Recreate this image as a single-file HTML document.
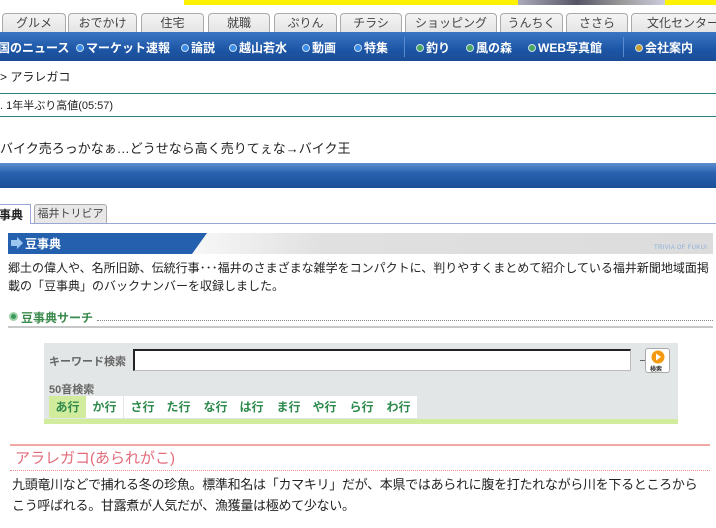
<!DOCTYPE html>
<html><head><meta charset="utf-8">
<style>
*{margin:0;padding:0;box-sizing:border-box}
body{width:716px;height:528px;overflow:hidden;background:#fff;font-family:"Liberation Sans","Noto Sans CJK JP",sans-serif;position:relative;color:#222}
.abs{position:absolute;white-space:nowrap}
.tab{position:absolute;top:13px;height:20px;background:linear-gradient(#f4f4f4,#e4e4e4);border:1px solid #aaa;border-bottom:none;border-radius:4px 4px 0 0;font-size:12px;color:#444;text-align:center;line-height:19px;white-space:nowrap;overflow:hidden}
.nav{position:absolute;top:32px;left:0;width:716px;height:29px;background:linear-gradient(#3a76c4,#1d56a6 60%,#1a4c95);color:#fff;font-size:12px;font-weight:bold}
.nav span{position:absolute;top:7px;white-space:nowrap}
.dot{display:inline-block;width:8px;height:8px;border-radius:50%;margin-right:2px;vertical-align:0px;border:1px solid #cde}
.sep{position:absolute;top:5px;width:1px;height:20px;background:#5a8ad0}
.g{position:absolute;top:396px;height:22px;width:37px;background:#fff;color:#2e8a4c;font-size:12px;font-weight:bold;text-align:center;line-height:22px}
</style></head><body>
<div class="abs" style="left:184px;top:0;width:532px;height:5px;background:#fff200"></div>
<div class="abs" style="left:518px;top:0;width:147px;height:5px;background:linear-gradient(90deg,#aab,#556 40%,#999 70%,#ccd)"></div>

<div class="tab" style="left:2px;width:64px">グルメ</div>
<div class="tab" style="left:68px;width:69px">おでかけ</div>
<div class="tab" style="left:141px;width:63px">住宅</div>
<div class="tab" style="left:208px;width:62px">就職</div>
<div class="tab" style="left:274px;width:63px">ぷりん</div>
<div class="tab" style="left:340px;width:62px">チラシ</div>
<div class="tab" style="left:405px;width:92px">ショッピング</div>
<div class="tab" style="left:500px;width:63px">うんちく</div>
<div class="tab" style="left:566px;width:62px">ささら</div>
<div class="tab" style="left:631px;width:100px;text-align:left;padding-left:15px">文化センター</div>

<div class="nav">
<span style="left:-2px">国のニュース</span>
<span style="left:76px"><i class="dot" style="background:#3b8de8"></i>マーケット速報</span>
<span style="left:181px"><i class="dot" style="background:#3b8de8"></i>論説</span>
<span style="left:229px"><i class="dot" style="background:#3b8de8"></i>越山若水</span>
<span style="left:302px"><i class="dot" style="background:#3b8de8"></i>動画</span>
<span style="left:354px"><i class="dot" style="background:#3b8de8"></i>特集</span>
<div class="sep" style="left:404px"></div>
<span style="left:416px"><i class="dot" style="background:#4aa860"></i>釣り</span>
<span style="left:466px"><i class="dot" style="background:#4aa860"></i>風の森</span>
<span style="left:528px"><i class="dot" style="background:#4aa860"></i>WEB写真館</span>
<div class="sep" style="left:623px"></div>
<span style="left:635px"><i class="dot" style="background:#c9a030"></i>会社案内</span>
</div>

<div class="abs" style="left:0;top:68px;font-size:12px">&gt; アラレガコ</div>
<div class="abs" style="left:0;top:93px;width:716px;height:1px;background:#2a8080"></div>
<div class="abs" style="left:0;top:97px;font-size:11px">. 1年半ぶり高値(05:57)</div>
<div class="abs" style="left:0;top:116px;width:716px;height:1px;background:#2a8080"></div>
<div class="abs" style="left:0;top:138px;font-size:13px">バイク売ろっかなぁ…どうせなら高く売りてぇな→バイク王</div>

<div class="abs" style="left:0;top:163px;width:716px;height:25px;background:linear-gradient(#5c8fd0,#2a62b0 40%,#1b4f98)"></div>

<div class="abs" style="left:0;top:223px;width:716px;height:1px;background:#9aa6d8"></div>
<div class="abs" style="left:-4px;top:204px;width:35px;height:20px;background:#fff;border:1px solid #9aa6d8;border-bottom:none;font-size:12px;font-weight:bold;line-height:20px;padding-left:2px">事典</div>
<div class="abs" style="left:34px;top:204px;width:73px;height:19px;background:#e8e8e8;border:1px solid #aaa;border-bottom:none;border-radius:3px 3px 0 0;font-size:11px;color:#444;line-height:19px;text-align:center">福井トリビア</div>

<div class="abs" style="left:8px;top:233px;width:705px;height:21px;background:linear-gradient(90deg,#fff 20%,#e0e0e0 45%,#dcdcdc)"></div>
<svg class="abs" style="left:8px;top:233px" width="200" height="21"><polygon points="0,0 199,0 184,21 0,21" fill="#2460ad"/><polygon points="3,7 9,7 9,4 15,10 9,16 9,13 3,13" fill="#9cc6f0"/></svg>
<div class="abs" style="left:25px;top:235px;font-size:12px;color:#fff;font-weight:bold">豆事典</div>
<div class="abs" style="left:654px;top:245px;font-size:6px;color:#8ab0d8;letter-spacing:.3px">TRIVIA OF FUKUI</div>
<div class="abs" style="left:8px;top:259px;width:702px;font-size:12px;line-height:18px;white-space:normal">郷土の偉人や、名所旧跡、伝統行事･･･福井のさまざまな雑学をコンパクトに、判りやすくまとめて紹介している福井新聞地域面掲載の「豆事典」のバックナンバーを収録しました。</div>

<div class="abs" style="left:9px;top:312px;width:9px;height:9px;border-radius:50%;background:#3a9a5a;border:2px solid #9ed0a8"></div>
<div class="abs" style="left:21px;top:309px;font-size:12px;font-weight:bold;color:#3a8a4c">豆事典サーチ</div>
<div class="abs" style="left:97px;top:320px;width:616px;border-top:1px dotted #888"></div>
<div class="abs" style="left:8px;top:326px;width:705px;height:2px;background:#c8c8c8"></div>

<div class="abs" style="left:44px;top:343px;width:634px;height:81px;background:#e3e6e6;border-bottom:5px solid #d2ec9e"></div>
<div class="abs" style="left:49px;top:353px;font-size:11px;font-weight:bold;color:#666">キーワード検索</div>
<div class="abs" style="left:133px;top:349px;width:498px;height:22px;background:#fff;border:1px solid #bbb;border-top:2px solid #222;border-left:2px solid #222"></div>
<div class="abs" style="left:640px;top:360px;width:5px;height:1px;background:#666"></div>
<div class="abs" style="left:645px;top:348px;width:25px;height:25px;border:1px solid #aaa;border-radius:3px;background:#fff"></div>
<svg class="abs" style="left:650px;top:350px" width="16" height="15"><circle cx="8" cy="7" r="6.5" fill="#f39a10"/><polygon points="6,3.5 11,7 6,10.5" fill="#fff"/></svg>
<div class="abs" style="left:650px;top:364px;font-size:6px;font-weight:bold;color:#333">検索</div>
<div class="abs" style="left:49px;top:381px;font-size:11px;font-weight:bold;color:#666">50音検索</div>
<div class="g" style="left:49px;background:#d2ec9e">あ行</div>
<div class="g" style="left:86px">か行</div>
<div class="g" style="left:124px">さ行</div>
<div class="g" style="left:160px">た行</div>
<div class="g" style="left:197px">な行</div>
<div class="g" style="left:233px">は行</div>
<div class="g" style="left:270px">ま行</div>
<div class="g" style="left:306px">や行</div>
<div class="g" style="left:343px">ら行</div>
<div class="g" style="left:380px">わ行</div>

<div class="abs" style="left:10px;top:444px;width:700px;height:2px;background:#f2a8a4"></div>
<div class="abs" style="left:15px;top:447px;font-size:15px;color:#e36a7a">アラレガコ(あられがこ)</div>
<div class="abs" style="left:10px;top:470px;width:700px;border-top:1px dotted #f09090"></div>
<div class="abs" style="left:12px;top:474px;width:700px;font-size:13px;line-height:21px;white-space:normal;letter-spacing:-0.3px">九頭竜川などで捕れる冬の珍魚。標準和名は「カマキリ」だが、本県ではあられに腹を打たれながら川を下るところから<br>こう呼ばれる。甘露煮が人気だが、漁獲量は極めて少ない。</div>
</body></html>
